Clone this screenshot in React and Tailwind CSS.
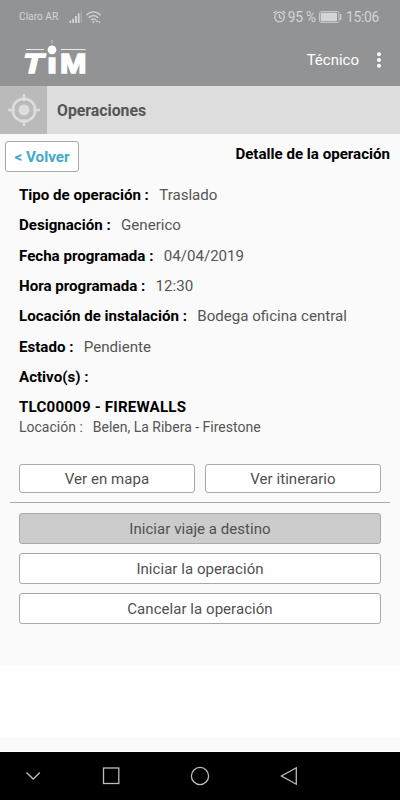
import { MoreVertical } from "lucide-react";

const details = [
    { label: "Tipo de operación :", value: "Traslado" },
    { label: "Designación :", value: "Generico" },
    { label: "Fecha programada :", value: "04/04/2019" },
    { label: "Hora programada :", value: "12:30" },
    { label: "Locación de instalación :", value: "Bodega oficina central" },
    { label: "Estado :", value: "Pendiente" },
    { label: "Activo(s) :", value: "" },
];

function StatusBar() {
    return (
        <div className="h-[34px] flex items-center justify-between pl-[19px] pr-[21px] text-[#d4d5d6]">
            <div className="flex items-center">
                <span className="w-[40px] pt-px text-[10.2px] leading-none whitespace-nowrap">Claro AR</span>
                <svg className="ml-[10px] w-[14px] h-[13px]" viewBox="0 0 14 13" fill="currentColor">
                    <rect x="0.5" y="9.5" width="1.6" height="2.5" />
                    <rect x="3.3" y="7.7" width="1.7" height="4.3" />
                    <rect x="6" y="5" width="1.8" height="7" />
                    <rect x="8.8" y="2.5" width="1.8" height="9.5" />
                    <rect x="11.6" y="0" width="1.4" height="12" opacity="0.35" />
                </svg>
                <svg className="ml-[3px] w-4 h-[13px]" viewBox="0 0 16 13" fill="none" stroke="currentColor" strokeWidth="1.3">
                    <path d="M0.5 4.2C4.5 -0.2 10.5 -0.2 14.5 4.2" />
                    <path d="M2.8 6.7C5.5 3.8 9.5 3.8 12.2 6.7" />
                    <path d="M5 9C6.6 7.5 8.4 7.5 10 9" />
                    <circle cx="7.5" cy="11" r="1.1" fill="currentColor" stroke="none" />
                    <path d="M11 9l-1.4 2H12.4zM13.5 12.5l-1.2-2h2.4z" fill="currentColor" stroke="none" />
                </svg>
            </div>
            <div className="flex items-center text-[13.8px] tracking-[-0.25px] leading-none">
                <svg className="w-[13px] h-[13px] mr-[2px]" viewBox="0 0 13 13" fill="none" stroke="currentColor" strokeWidth="1.2">
                    <circle cx="6.5" cy="7" r="4.8" />
                    <path d="M6.5 4v3.2l2 1.6M0.6 3.3L3.4 0.9M12.4 3.3L9.6 0.9" />
                </svg>
                <span className="pt-px">95 %</span>
                <svg className="w-[23px] h-3 ml-[3px] mr-[4px]" viewBox="0 0 23 12">
                    <rect x="0.5" y="0.5" width="19.5" height="11" rx="1.8" fill="none" stroke="currentColor" strokeWidth="0.8" />
                    <rect x="1.7" y="1.7" width="16.3" height="8.6" rx="0.6" fill="currentColor" />
                    <path d="M21.7 3v6" stroke="currentColor" strokeWidth="1.3" />
                </svg>
                <span className="pt-px">15:06</span>
            </div>
        </div>
    );
}

function Logo() {
    return (
        <svg className="w-[68px] h-[52px]" viewBox="0 0 68 52" fill="#fff">
            <path d="M3 15.5h18M38 15.5h24.5" stroke="#fff" strokeWidth="1" opacity="0.8" />
            <path d="M29 6v3" stroke="#fff" strokeWidth="1" opacity="0.6" />
            <circle cx="29" cy="15.8" r="4.4" />
            <g fontFamily="Liberation Sans, sans-serif" fontWeight="bold" fontSize="28.5" stroke="#fff" strokeWidth="1.6">
                <text x="0.3" y="39.2" fontStyle="italic" textLength="20" lengthAdjust="spacingAndGlyphs">T</text>
                <text x="24" y="39.2" textLength="10" lengthAdjust="spacingAndGlyphs">ı</text>
                <text x="37" y="39.2" textLength="26.5" lengthAdjust="spacingAndGlyphs">M</text>
            </g>
        </svg>
    );
}

function Button({ children, className = "bg-white h-[31px]" }) {
    return (
        <button className={`border border-[#a9a9ac] rounded-[3px] pt-px text-[15px] tracking-[0.05px] text-[#505050] flex items-center justify-center ${className}`}>
            {children}
        </button>
    );
}

export default function App() {
    return (
        <div className="w-full h-[800px] flex flex-col bg-[#fafafa] overflow-hidden font-[Roboto,sans-serif]">
            <header className="h-[86px] shrink-0 bg-[#929395]">
                <StatusBar />
                <div className="h-[52px] flex items-start justify-between pl-[23px] pr-[11px]">
                    <Logo />
                    <div className="h-[52px] flex items-center text-white">
                        <span className="pt-px text-[15px]">Técnico</span>
                        <MoreVertical className="w-5 h-5 ml-[10px]" strokeWidth={2.8} />
                    </div>
                </div>
            </header>

            <div className="h-12 shrink-0 flex items-center bg-[#dddddd]">
                <div className="w-[47px] h-12 bg-[#bababa] flex items-center justify-center">
                    <svg className="w-8 h-8" viewBox="0 0 32 32" fill="none" stroke="#dddddd">
                        <circle cx="16" cy="16" r="11.3" strokeWidth="2.6" />
                        <circle cx="16" cy="16" r="5.5" fill="#dddddd" stroke="none" />
                        <path d="M16 0v7M16 25v7M0 16h7M25 16h7" strokeWidth="2.6" />
                    </svg>
                </div>
                <h1 className="ml-[10px] pt-[2px] text-[15.8px] font-bold text-[#555555]">Operaciones</h1>
            </div>

            <main className="h-[532px] shrink-0">
                <div className="flex items-start justify-between pt-[7px] pl-[5px] pr-[10px]">
                    <button className="w-[74px] h-[31px] pt-[2px] bg-white border border-[#a9a9ac] rounded-[3px] text-[15.2px] font-bold text-[#3fa9d0]">
                        &lt; Volver
                    </button>
                    <h2 className="mt-[3px] text-[15.1px] leading-5 font-bold text-black">Detalle de la operación</h2>
                </div>

                <div className="px-[19px] pt-[8px]">
                    {details.map((item) => (
                        <div key={item.label} className="h-[30.35px] flex items-center text-[15.1px]">
                            <span className="font-bold text-black">{item.label}</span>
                            <span className="ml-[10.3px] text-[#555555]">{item.value}</span>
                        </div>
                    ))}
                    <h3 className="h-[30px] flex items-center text-[15.1px] tracking-[0.2px] font-bold text-black">TLC00009 - FIREWALLS</h3>
                    <p className="-mt-1 h-[18px] flex items-center text-[14px] text-[#555555]">
                        <span>Locación :</span>
                        <span className="ml-[10px]">Belen, La Ribera - Firestone</span>
                    </p>
                    <div className="mt-[27.55px] grid grid-cols-2 gap-[10px]">
                        <Button className="bg-white h-[29px]">Ver en mapa</Button>
                        <Button className="bg-white h-[29px]">Ver itinerario</Button>
                    </div>
                </div>

                <hr className="mt-[9px] mx-[10px] border-t border-[#a4a5ad]" />

                <div className="mt-[10px] px-[19px] flex flex-col gap-[9px]">
                    <Button className="bg-[#cccccc] h-[31px]">Iniciar viaje a destino</Button>
                    <Button>Iniciar la operación</Button>
                    <Button>Cancelar la operación</Button>
                </div>
            </main>

            <div className="h-[72px] shrink-0 bg-white"></div>
            <div className="h-[14px] shrink-0 border-b border-white"></div>

            {/* Android navigation */}
            <nav className="h-12 shrink-0 bg-black">
                <svg className="w-[400px] h-12" viewBox="0 0 400 48" fill="none" stroke="#bdbdbd" strokeWidth="1.3">
                    <path d="M26.5 20.5l6.7 6.5 6.7-6.5" />
                    <rect x="103.5" y="16" width="15.3" height="15.5" />
                    <circle cx="200" cy="24" r="8.6" />
                    <path d="M296.3 15.8v16.4L281.5 24z" />
                </svg>
            </nav>
        </div>
    );
}
